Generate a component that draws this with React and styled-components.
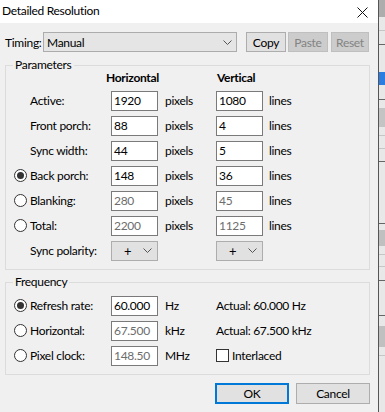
import React from 'react';
import styled, { createGlobalStyle } from 'styled-components';

const Global = createGlobalStyle`
  html, body { margin: 0; padding: 0; background: #f0f0f0; }
  body {
    font-family: Lato, "Noto Sans", sans-serif;
    font-size: 12px;
    letter-spacing: -0.3px;
    color: #000;
  }
  * { box-sizing: border-box; }
`;

const Page = styled.div`
  display: flex;
  width: 385px;
  height: 412px;
  overflow: hidden;
`;

const Dialog = styled.div`
  flex: none;
  width: 379px;
  height: 412px;
  background: #f0f0f0;
  border-right: 1px solid #555;
  display: flex;
  flex-direction: column;
`;

const TitleBar = styled.div`
  height: 23px;
  background: #fff;
  display: flex;
  align-items: center;
  justify-content: space-between;
  padding: 0 10px 0 2px;
  font-size: 12px;
  line-height: 14px;
`;

const TitleText = styled.span`
  margin-top: -2px;
`;

const CloseIcon = styled.svg`
  width: 11px;
  height: 11px;
  margin-top: 2px;
`;

const TimingRow = styled.div`
  display: flex;
  align-items: center;
  height: 20px;
  margin-top: 9px;
  padding-left: 5px;
`;

const TimingLabel = styled.span`
  width: 38px;
`;

const Combo = styled.div`
  width: 194px;
  height: 20px;
  background: #e5e5e5;
  border: 1px solid #acacac;
  display: flex;
  align-items: center;
  justify-content: space-between;
  padding: 0 4px 0 3px;
`;

const Chevron = styled.svg`
  width: 9px;
  height: 5px;
`;

const Button = styled.div`
  width: ${p => p.$w}px;
  height: ${p => p.$h || 20}px;
  margin-left: ${p => p.$ml || 0}px;
  display: flex;
  align-items: center;
  justify-content: center;
  background: ${p => (p.$disabled ? '#cccccc' : '#e1e1e1')};
  border: ${p => (p.$default ? '2px solid #0078d7' : p.$disabled ? '1px solid #bfbfbf' : '1px solid #adadad')};
  color: ${p => (p.$disabled ? '#838383' : '#000')};
`;

const Group = styled.fieldset`
  margin: ${p => p.$mt}px 8px 0 5px;
  padding: ${p => p.$pt}px 0 6px 0;
  border: 1px solid #dcdcdc;
  min-width: 0;
`;

const Legend = styled.legend`
  margin-left: 7px;
  padding: 0 2px;
  line-height: 14px;
  font-size: 12px;
`;

const Grid = styled.div`
  display: grid;
  grid-template-columns: 105px 47px 58px 47px 1fr;
  grid-auto-rows: 25px;
  align-items: center;
`;

const HeaderRow = styled.div`
  display: flex;
  height: 16px;
  font-weight: bold;
  line-height: 12px;
`;

const HeaderCell = styled.span`
  margin-left: ${p => p.$ml}px;
`;

const LabelCell = styled.div`
  display: flex;
  align-items: center;
  padding-left: 8px;
`;

const Radio = styled.span`
  width: 13px;
  height: 13px;
  border-radius: 50%;
  border: 1px solid #333;
  background: #fff;
  margin-right: 3px;
  display: flex;
  align-items: center;
  justify-content: center;
  flex: none;
  &::after {
    content: '';
    width: 7px;
    height: 7px;
    border-radius: 50%;
    background: #333;
    display: ${p => (p.$checked ? 'block' : 'none')};
  }
`;

const RadioSpacer = styled.span`
  width: 16px;
  flex: none;
`;

const Field = styled.div`
  width: 47px;
  height: 20px;
  background: #fff;
  border: 1px solid #7a7a7a;
  display: flex;
  align-items: center;
  padding-left: 2px;
  color: ${p => (p.$disabled ? '#6d6d6d' : '#000')};
`;

const Unit = styled.span`
  padding-left: ${p => p.$pl || 7}px;
`;

const Polarity = styled.div`
  width: 47px;
  height: 20px;
  background: #e1e1e1;
  border: 1px solid #adadad;
  display: flex;
  align-items: center;
  padding: 0 5px 0 12px;
  justify-content: space-between;
  font-size: 13px;
`;

const CheckRow = styled.div`
  display: flex;
  align-items: center;
`;

const CheckBox = styled.span`
  width: 13px;
  height: 13px;
  border: 1px solid #333;
  background: #fff;
  margin-right: 3px;
`;

const ActualCell = styled.span`
  grid-column: 4 / span 2;
`;

const ButtonRow = styled.div`
  display: flex;
  justify-content: flex-end;
  gap: 7px;
  margin-top: 8px;
  padding-right: 8px;
`;

const Strip = styled.div`
  flex: 1;
  display: flex;
  flex-direction: column;
  background: #e8e8e8;
`;

const StripSeg = styled.div`
  flex: none;
  height: ${p => p.$h}px;
  background: ${p => p.$c};
`;

const stripData = [
  [17, '#adadad'], [13, '#e8e8e8'], [1, '#c6c6c6'], [13, '#e8e8e8'], [1, '#666'],
  [27, '#e8e8e8'], [13, '#2b7de0'], [14, '#e8e8e8'], [1, '#666'], [8, '#e8e8e8'],
  [19, '#c4c4c4'], [8, '#e8e8e8'], [1, '#c6c6c6'], [12, '#e8e8e8'], [1, '#c6c6c6'],
  [12, '#e8e8e8'], [1, '#666'], [61, '#e8e8e8'], [1, '#666'], [6, '#e8e8e8'],
  [16, '#c0c0c0'], [8, '#e8e8e8'], [1, '#c6c6c6'], [11, '#e8e8e8'], [1, '#c6c6c6'],
  [13, '#e8e8e8'], [1, '#666'], [34, '#e8e8e8'], [1, '#666'], [10, '#e8e8e8'],
  [21, '#c0c0c0'], [8, '#e8e8e8'], [1, '#c6c6c6'], [60, '#e8e8e8'],
];

const ChevronDown = () => (
  <Chevron viewBox="0 0 9 5">
    <path d="M0.5 0.5 L4.5 4.5 L8.5 0.5" fill="none" stroke="#555" strokeWidth="1" />
  </Chevron>
);

const paramRows = [
  { label: 'Active:', h: '1920', v: '1080' },
  { label: 'Front porch:', h: '88', v: '4' },
  { label: 'Sync width:', h: '44', v: '5' },
  { label: 'Back porch:', h: '148', v: '36', radio: true, checked: true },
  { label: 'Blanking:', h: '280', v: '45', radio: true, disabled: true },
  { label: 'Total:', h: '2200', v: '1125', radio: true, disabled: true },
];

const freqRows = [
  { label: 'Refresh rate:', val: '60.000', unit: 'Hz', checked: true, actual: 'Actual: 60.000 Hz' },
  { label: 'Horizontal:', val: '67.500', unit: 'kHz', disabled: true, actual: 'Actual: 67.500 kHz' },
  { label: 'Pixel clock:', val: '148.50', unit: 'MHz', disabled: true, check: true },
];

export default function App() {
  return (
    <Page>
      <Global />
      <Dialog>
        <TitleBar>
          <TitleText>Detailed Resolution</TitleText>
          <CloseIcon viewBox="0 0 11 11">
            <path d="M0.5 0.5 L10.5 10.5 M10.5 0.5 L0.5 10.5" stroke="#111" strokeWidth="1" fill="none" />
          </CloseIcon>
        </TitleBar>

        <TimingRow>
          <TimingLabel>Timing:</TimingLabel>
          <Combo>
            <span>Manual</span>
            <ChevronDown />
          </Combo>
          <Button $w={40} $ml={9}>Copy</Button>
          <Button $w={40} $ml={2} $disabled>Paste</Button>
          <Button $w={38} $ml={3} $disabled>Reset</Button>
        </TimingRow>

        <Group $mt={6} $pt={0}>
          <Legend>Parameters</Legend>
          <HeaderRow>
            <HeaderCell $ml={100}>Horizontal</HeaderCell>
            <HeaderCell $ml={58}>Vertical</HeaderCell>
          </HeaderRow>
          <Grid>
            {paramRows.map(r => (
              <React.Fragment key={r.label}>
                <LabelCell>
                  {r.radio ? <Radio $checked={r.checked} /> : <RadioSpacer />}
                  <span>{r.label}</span>
                </LabelCell>
                <Field $disabled={r.disabled}>{r.h}</Field>
                <Unit>pixels</Unit>
                <Field $disabled={r.disabled}>{r.v}</Field>
                <Unit $pl={6}>lines</Unit>
              </React.Fragment>
            ))}
            <LabelCell>
              <RadioSpacer />
              <span>Sync polarity:</span>
            </LabelCell>
            <Polarity>
              <span>+</span>
              <ChevronDown />
            </Polarity>
            <span />
            <Polarity>
              <span>+</span>
              <ChevronDown />
            </Polarity>
            <span />
          </Grid>
        </Group>

        <Group $mt={5} $pt={4}>
          <Legend>Frequency</Legend>
          <Grid>
            {freqRows.map(r => (
              <React.Fragment key={r.label}>
                <LabelCell>
                  <Radio $checked={r.checked} />
                  <span>{r.label}</span>
                </LabelCell>
                <Field $disabled={r.disabled}>{r.val}</Field>
                <Unit>{r.unit}</Unit>
                {r.check ? (
                  <ActualCell>
                    <CheckRow>
                      <CheckBox />
                      <span>Interlaced</span>
                    </CheckRow>
                  </ActualCell>
                ) : (
                  <ActualCell>{r.actual}</ActualCell>
                )}
              </React.Fragment>
            ))}
          </Grid>
        </Group>

        <ButtonRow>
          <Button $w={74} $h={21} $default>OK</Button>
          <Button $w={74} $h={21}>Cancel</Button>
        </ButtonRow>
      </Dialog>
      <Strip>
        {stripData.map(([h, c], i) => (
          <StripSeg key={i} $h={h} $c={c} />
        ))}
      </Strip>
    </Page>
  );
}
